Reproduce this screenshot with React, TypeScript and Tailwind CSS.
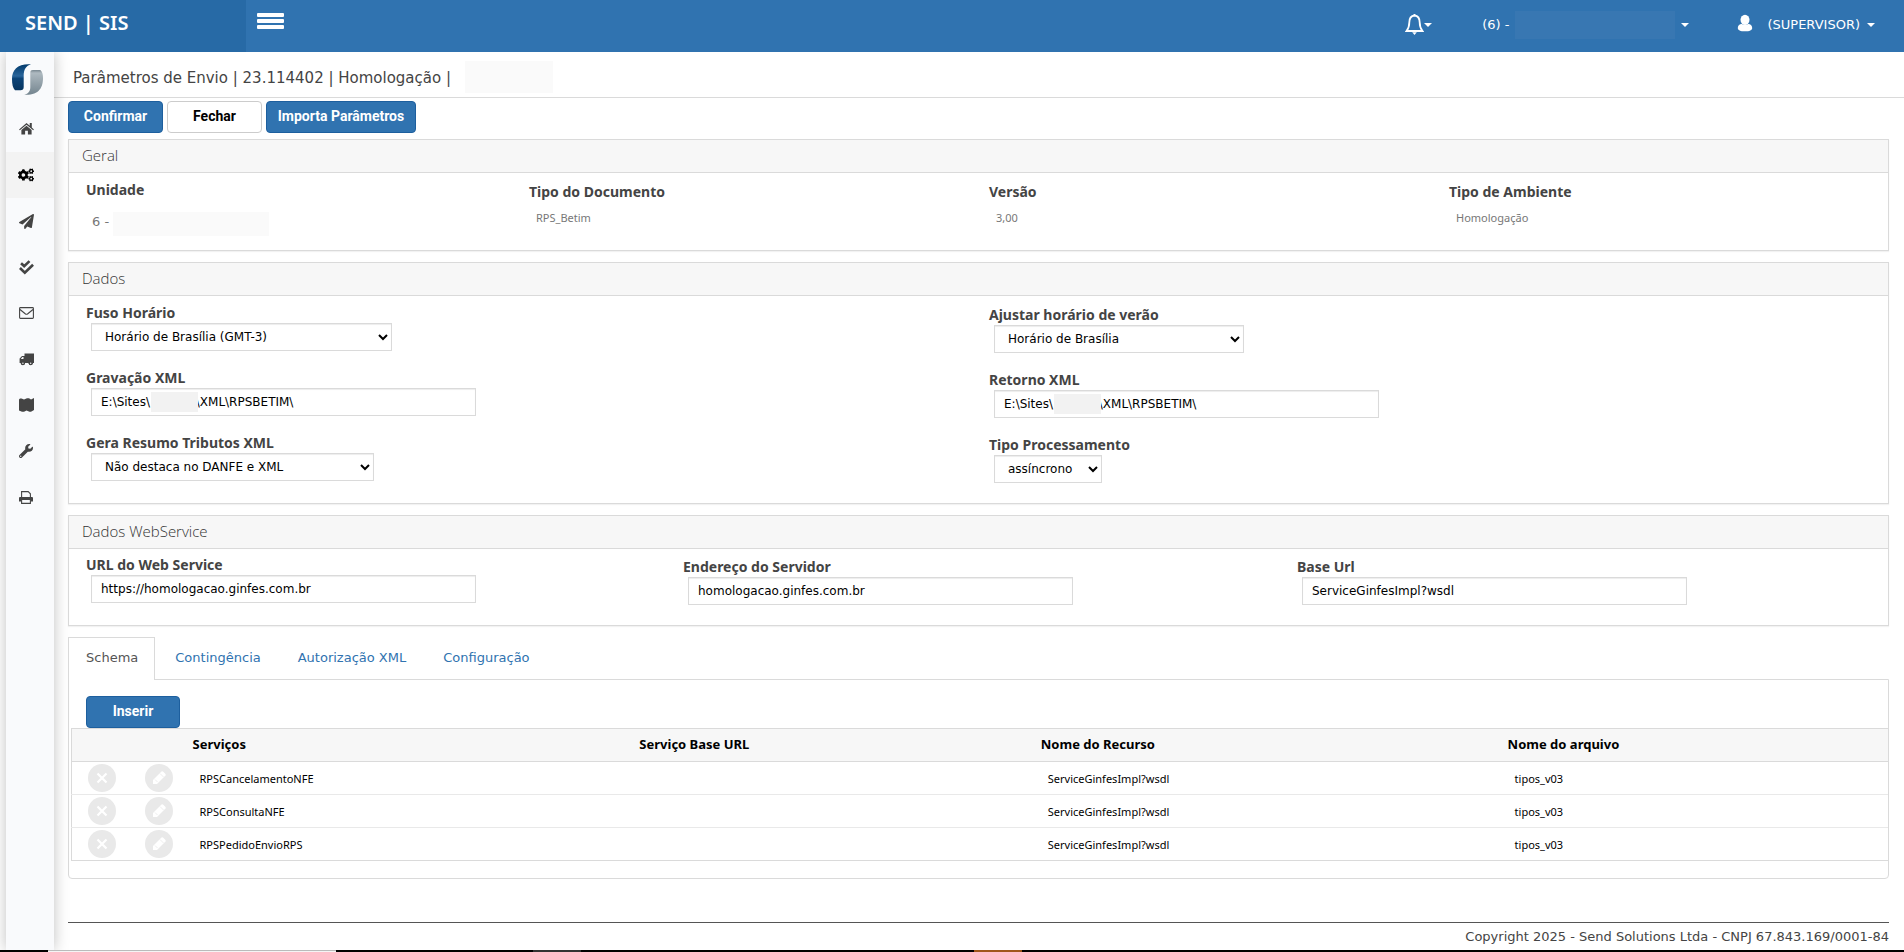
import type { ReactNode } from "react";
import { FaCogs, FaPaperPlane, FaWrench } from "react-icons/fa";

const verdana = "font-['DejaVu_Sans',Verdana,sans-serif]";

function Caret() {
  return (
    <svg viewBox="0 0 8 4" className="h-1 w-2 shrink-0" fill="currentColor" aria-hidden="true">
      <path d="M0 0h8L4 4z" />
    </svg>
  );
}

function Logo() {
  return (
    <svg viewBox="0 0 31 31" className="size-[31px]" aria-hidden="true">
      <defs>
        <linearGradient id="logo-blue" x1="0" y1="0" x2="0" y2="1">
          <stop offset="0" stopColor="#00396b" />
          <stop offset="0.45" stopColor="#2a659b" />
          <stop offset="0.55" stopColor="#0c4377" />
          <stop offset="1" stopColor="#05345f" />
        </linearGradient>
        <linearGradient id="logo-gray" x1="0" y1="0" x2="0" y2="1">
          <stop offset="0" stopColor="#77868f" />
          <stop offset="0.12" stopColor="#aeb9c0" />
          <stop offset="1" stopColor="#74858f" />
        </linearGradient>
      </defs>
      <path d="M19 .3C6 -.5 0 5.500 0 15c0 5 .8 9 3 11.300h5.500c2.200 0 3.200-1.200 3.200-3.300V12C11.700 5.500 14 1.800 19 .3z" fill="url(#logo-blue)" />
      <path d="M18.300 8.700c0-2 .9-2.700 2.700-2.700h7.300c2 1.500 2.700 4.500 2.700 8 0 9.500-4 17.500-18.700 16.800 4-1.300 6-3.300 6-7.800z" fill="url(#logo-gray)" />
    </svg>
  );
}

function HomeIcon() {
  return (
    <svg viewBox="0 0 16 14" className="mb-0.5 h-[13px] w-[15px]" fill="currentColor">
      <path d="M8 1.200 0 8l.8 1L8 3l7.200 6 .8-1-2.300-2V1h-2.200v3.100zM8 4 2.500 8.600V13.500h4V9.500h3v4h4V8.600z" />
    </svg>
  );
}

function ChecksIcon() {
  return (
    <svg viewBox="0 0 16 16" className="h-[15px] w-[15px]" fill="none" stroke="currentColor" strokeWidth="2.800">
      <path d="M2.200 3.500 5.500 6.500 11.200 1.200M1 8.500 6.200 13.500 15 5" />
    </svg>
  );
}

function MailIcon() {
  return (
    <svg viewBox="0 0 15 12" className="h-3 w-[15px]" fill="none" stroke="currentColor" strokeWidth="1.100">
      <rect x=".6" y=".6" width="13.800" height="10.800" rx=".8" />
      <path d="M1 2.500 6.500 7q1 .6 2 0L14 2.500" />
    </svg>
  );
}

function TruckIcon() {
  return (
    <svg viewBox="0 0 15 13" className="h-[13px] w-[15px]" fill="currentColor">
      <path fillRule="evenodd" d="M5.500.5H15v9.500h-1.200a2.100 2.100 0 0 1-4.200 0H6a2.100 2.100 0 0 1-4.200 0H.6V5.500L3 3h2.500zM1.800 6h2.700V4H3.400z" />
      <circle cx="3.900" cy="10.200" r="2" />
      <circle cx="11.700" cy="10.200" r="2" />
      <circle cx="3.900" cy="10.200" r=".7" fill="#f9fafc" />
      <circle cx="11.700" cy="10.200" r=".7" fill="#f9fafc" />
    </svg>
  );
}

function MapIcon() {
  return (
    <svg viewBox="0 0 15 14" className="h-3.5 w-[15px]" fill="currentColor">
      <path d="M0 1.500 1 .5h1.500l2.500 1L8 .3h2l2 1.200L15 0v12l-3 1.700h-1.500L7.500 12.500 5 13.700H3L0 12.500z" />
    </svg>
  );
}

function PrintIcon() {
  return (
    <svg viewBox="0 0 14 13" className="h-[13px] w-[14px]">
      <path d="M2.600 6V.6h6.600l2.200 2.200V6" fill="none" stroke="currentColor" strokeWidth="1.100" />
      <path d="M0 7q0-1 1-1h12q1 0 1 1v3.500h-2V9H2v1.500H0z" fill="currentColor" />
      <path d="M2.600 9v3.400h8.800V9" fill="none" stroke="currentColor" strokeWidth="1.100" />
    </svg>
  );
}

const navItems: { label: string; icon: ReactNode; active?: boolean }[] = [
  { label: "Início", icon: <HomeIcon /> },
  { label: "Parâmetros", icon: <FaCogs className="size-4" />, active: true },
  { label: "Envio", icon: <FaPaperPlane className="size-[15px]" /> },
  { label: "Conferência", icon: <ChecksIcon /> },
  { label: "E-mail", icon: <MailIcon /> },
  { label: "Transporte", icon: <TruckIcon /> },
  { label: "Mapa", icon: <MapIcon /> },
  { label: "Ferramentas", icon: <FaWrench className="size-[14px]" /> },
  { label: "Impressão", icon: <PrintIcon /> },
];

function Header() {
  return (
    <header className={`flex h-[52px] shrink-0 items-stretch bg-[#3073b0] text-white ${verdana}`}>
      <div className="flex w-[246px] items-start bg-[#276aa6] pt-2.5 pl-[25px] font-['Noto_Sans',sans-serif] text-xl leading-[26px] font-semibold">
        SEND | SIS
      </div>
      <button type="button" aria-label="Menu" className="ml-[11px] flex h-[42px] w-[27px] flex-col justify-center gap-0.5">
        <span className="h-1 rounded-[1px] bg-white" />
        <span className="h-1 rounded-[1px] bg-white" />
        <span className="h-1 rounded-[1px] bg-white" />
      </button>
      <div className="mr-[29px] ml-auto flex h-[50px] items-center text-[13px]">
        <button type="button" aria-label="Notificações" className="flex items-center">
          <svg viewBox="0 0 19 21" className="mb-0.5 h-[21px] w-[19px]" fill="none" stroke="currentColor" strokeWidth="1.800">
            <path d="M9.500 1.500C5.500 2 4.300 5 4.300 8.500 4.300 13 3.500 14.500 1.500 17h16c-2-2.500-2.800-4-2.800-8.500 0-3.500-1.200-6.500-5.200-7z" />
            <path d="M9.500 0v2" />
            <path d="M7.200 18.200h4.600L9.500 21z" fill="currentColor" stroke="none" />
          </svg>
          <Caret />
        </button>
        <button type="button" className="ml-[50px] flex items-center">
          <span>(6) -</span>
          <span className="mx-1.5 h-7 w-40 bg-[#3877b2]" />
          <Caret />
        </button>
        <button type="button" className="ml-12 flex items-center">
          <svg viewBox="0 0 17 20" className="mb-1 h-[18px] w-4" fill="currentColor">
            <ellipse cx="8.500" cy="6.500" rx="5" ry="5.800" />
            <path d="M.500 15.500c0-3 2.500-4.500 4.500-4.300 2 1.500 5 1.500 7 0 2-.2 4.500 1.300 4.500 4.300 0 2.500-3 3.800-8 3.800s-8-1.300-8-3.800z" />
          </svg>
          <span className="mr-[7px] ml-3.5">(SUPERVISOR)</span>
          <Caret />
        </button>
      </div>
    </header>
  );
}

function Sidebar() {
  return (
    <nav className="z-10 ml-1.5 flex w-12 shrink-0 flex-col bg-[#f9fafc] text-[#444] shadow-[0_0_14px_rgba(0,0,0,0.25)]">
      <a href="#inicio" aria-label="Send" className="flex h-[54px] items-center justify-center pr-1.5">
        <Logo />
      </a>
      {navItems.map((item) => (
        <a
          key={item.label}
          href="#menu"
          aria-label={item.label}
          className={
            item.active
              ? "flex h-[46px] items-center justify-center bg-[#f3f3f3] pr-2 text-black"
              : "flex h-[46px] items-center justify-center pr-2"
          }
        >
          {item.icon}
        </a>
      ))}
    </nav>
  );
}

function Panel({ title, children }: { title: string; children: ReactNode }) {
  return (
    <section className="mb-[11px] border border-[#dadada] bg-white shadow-[0_1px_1px_rgba(0,0,0,0.05)]">
      <h2 className="border-b border-[#dadada] bg-[#f7f7f7] px-[13px] pb-0.5 font-['Open_Sans',sans-serif] text-[15px] leading-[30px] font-light text-[#333]">
        {title}
      </h2>
      {children}
    </section>
  );
}

const labelClass = "block font-['Noto_Sans',sans-serif] text-sm leading-5 font-bold text-[#444]";
const controlClass = `ml-[5px] block h-7 border border-[#dadada] bg-white text-xs text-black shadow-[inset_0_1px_1px_rgba(0,0,0,0.075)] ${verdana}`;

function SelectField({ id, label, value, width }: { id: string; label: string; value: string; width: string }) {
  return (
    <div className="h-[65px]">
      <label htmlFor={id} className={labelClass}>
        {label}
      </label>
      <select id={id} className={`${controlClass} ${width} pl-[9px]`}>
        <option>{value}</option>
      </select>
    </div>
  );
}

function TextField({ id, label, value, masked }: { id: string; label: string; value: string; masked?: boolean }) {
  return (
    <div className="h-[65px]">
      <label htmlFor={id} className={labelClass}>
        {label}
      </label>
      <div className="relative">
        <input id={id} type="text" defaultValue={value} className={`${controlClass} w-[385px] px-[9px]`} />
        {masked && <span className="absolute top-1 left-[65px] h-5 w-[47px] bg-[#f2f2f2]" />}
      </div>
    </div>
  );
}

function Info({ label, value }: { label: string; value: string }) {
  return (
    <div className="pt-0.5">
      <div className={labelClass}>{label}</div>
      <div className="pt-1.5 pl-[7px] font-['Noto_Sans',sans-serif] text-[11px] leading-5 text-[#777]">{value}</div>
    </div>
  );
}

const blueButton =
  "h-8 rounded border border-[#1d5f9e] bg-[#3073b0] pb-0.5 font-['Roboto',sans-serif] text-sm font-bold text-white";

function XCircle() {
  return (
    <svg viewBox="0 0 28 28" className="size-7" aria-hidden="true">
      <circle cx="14" cy="14" r="14" fill="#e9e9e9" />
      <path d="M9.500 9.500l9 9M18.500 9.500l-9 9" stroke="#fff" strokeWidth="2.200" />
    </svg>
  );
}

function PencilCircle() {
  return (
    <svg viewBox="0 0 28 28" className="size-7" aria-hidden="true">
      <circle cx="14" cy="14" r="14" fill="#e9e9e9" />
      <path d="M8 20v-4l8.500-8.500q.8-.5 1.500 0l2.500 2.500q.5.800 0 1.500L12 20z" fill="#fff" />
      <path d="M10 15.500l2.500 2.500M15 9.500l3.500 3.500" stroke="#e9e9e9" strokeWidth=".8" />
    </svg>
  );
}

const services = ["RPSCancelamentoNFE", "RPSConsultaNFE", "RPSPedidoEnvioRPS"];
const tabs = ["Contingência", "Autorização XML", "Configuração"];

function SchemaTable() {
  return (
    <table className="ml-0.5 w-[calc(100%-2px)] table-fixed border-collapse border-y border-l border-[#dadada] text-left font-['Noto_Sans',sans-serif] text-black">
      <colgroup>
        <col className="w-[59px]" />
        <col className="w-[57px]" />
        <col className="w-[24.6%]" />
        <col className="w-[22.1%]" />
        <col className="w-[25.7%]" />
        <col />
      </colgroup>
      <thead className="text-[13px]">
        <tr className="h-[33px] border-b border-[#dadada] bg-[#f7f7f7]">
          <th aria-label="Excluir" />
          <th aria-label="Editar" />
          <th className="pl-[5px] font-bold">Serviços</th>
          <th className="pl-[5px] font-bold">Serviço Base URL</th>
          <th className="pl-[5px] font-bold">Nome do Recurso</th>
          <th className="pl-[5px] font-bold">Nome do arquivo</th>
        </tr>
      </thead>
      <tbody className="text-[11px]">
        {services.map((service) => (
          <tr key={service} className="h-[33px] border-b border-[#e9e9e9] last:border-[#dadada]">
            <td className="pl-4">
              <button type="button" aria-label={`Excluir ${service}`} className="block">
                <XCircle />
              </button>
            </td>
            <td className="pl-3.5">
              <button type="button" aria-label={`Editar ${service}`} className="block">
                <PencilCircle />
              </button>
            </td>
            <td className="pt-0.5 pl-3">{service}</td>
            <td />
            <td className="pt-0.5 pl-3">ServiceGinfesImpl?wsdl</td>
            <td className="pt-0.5 pl-3">tipos_v03</td>
          </tr>
        ))}
      </tbody>
    </table>
  );
}

export default function App() {
  return (
    <div className="flex min-h-screen flex-col bg-white">
      <Header />
      <div className="flex flex-1 items-stretch overflow-hidden">
        <Sidebar />
        <main className="flex min-w-0 flex-1 flex-col">
          <div className={`flex h-[46px] items-center border-b border-[#dadada] pl-[19px] text-[#444] ${verdana}`}>
            <h1 className="pt-1.5 text-[15px] leading-6">Parâmetros de Envio | 23.114402 | Homologação |</h1>
            <span className="mt-1 ml-3.5 h-8 w-[88px] bg-[#fafafa]" />
          </div>
          <div className="flex flex-1 flex-col pt-[3px] pr-[15px] pl-3.5">
            <div className="mb-1.5 flex gap-1">
              <button type="button" className={`${blueButton} w-[95px]`}>
                Confirmar
              </button>
              <button
                type="button"
                className="h-8 w-[95px] rounded border border-[#ccc] bg-white pb-0.5 font-['Roboto',sans-serif] text-sm font-bold text-black"
              >
                Fechar
              </button>
              <button type="button" className={`${blueButton} w-[150px]`}>
                Importa Parâmetros
              </button>
            </div>

            <Panel title="Geral">
              <div className="grid h-[77px] grid-cols-[443fr_460fr_460fr_439fr] pt-[7px] pl-[17px]">
                <div>
                  <div className={labelClass}>Unidade</div>
                  <div className={`flex items-center pt-2 pl-1.5 text-[13px] leading-5 text-[#777] ${verdana}`}>
                    6 -<span className="mt-1 ml-1 h-6 w-[156px] bg-[#fafafa]" />
                  </div>
                </div>
                <Info label="Tipo do Documento" value="RPS_Betim" />
                <Info label="Versão" value="3,00" />
                <Info label="Tipo de Ambiente" value="Homologação" />
              </div>
            </Panel>

            <Panel title="Dados">
              <div className="grid h-[207px] grid-cols-[903fr_899fr] pt-[7px] pl-[17px]">
                <div>
                  <SelectField id="fuso" label="Fuso Horário" value="Horário de Brasília (GMT-3)" width="w-[301px]" />
                  <TextField id="gravacao" label="Gravação XML" value={"E:\\Sites\\            \\XML\\RPSBETIM\\"} masked />
                  <SelectField id="resumo" label="Gera Resumo Tributos XML" value="Não destaca no DANFE e XML" width="w-[283px]" />
                </div>
                <div className="pt-0.5">
                  <SelectField id="verao" label="Ajustar horário de verão" value="Horário de Brasília" width="w-[250px]" />
                  <TextField id="retorno" label="Retorno XML" value={"E:\\Sites\\            \\XML\\RPSBETIM\\"} masked />
                  <SelectField id="processamento" label="Tipo Processamento" value="assíncrono" width="w-[108px]" />
                </div>
              </div>
            </Panel>

            <Panel title="Dados WebService">
              <div className="grid h-[76px] grid-cols-[597fr_614fr_591fr] pt-1.5 pl-[17px]">
                <TextField id="url" label="URL do Web Service" value="https://homologacao.ginfes.com.br" />
                <div className="pt-0.5">
                  <TextField id="servidor" label="Endereço do Servidor" value="homologacao.ginfes.com.br" />
                </div>
                <div className="pt-0.5">
                  <TextField id="base" label="Base Url" value="ServiceGinfesImpl?wsdl" />
                </div>
              </div>
            </Panel>

            <div role="tablist" className={`flex h-[42px] items-stretch text-[13px] text-[#3073b0] ${verdana}`}>
              <button
                type="button"
                role="tab"
                aria-selected="true"
                className="z-10 -mb-px border border-b-0 border-[#dadada] bg-white pr-4 pb-0.5 pl-[17px] text-[#555]"
              >
                Schema
              </button>
              <div className="flex gap-[37px] pl-5">
                {tabs.map((tab) => (
                  <button key={tab} type="button" role="tab" aria-selected="false">
                    {tab}
                  </button>
                ))}
              </div>
            </div>
            <div className="h-[200px] rounded-b border border-[#dadada] pt-4">
              <button type="button" className={`${blueButton} ml-[17px] block w-[94px]`}>
                Inserir
              </button>
              <SchemaTable />
            </div>

            <footer className={`mt-auto h-7 border-t border-[#555] pt-1 text-right text-[13px] leading-5 text-[#444] ${verdana}`}>
              Copyright 2025 - Send Solutions Ltda - CNPJ 67.843.169/0001-84
            </footer>
          </div>
        </main>
      </div>
      <div className="flex h-0.5 shrink-0 bg-black" aria-hidden="true">
        <span className="ml-12 w-72 border-t border-[#bbb] bg-[#f5f5f5]" />
        <span className="ml-[197px] w-12 bg-[#333]" />
        <span className="ml-[393px] w-12 bg-[#a0561a]" />
      </div>
    </div>
  );
}
